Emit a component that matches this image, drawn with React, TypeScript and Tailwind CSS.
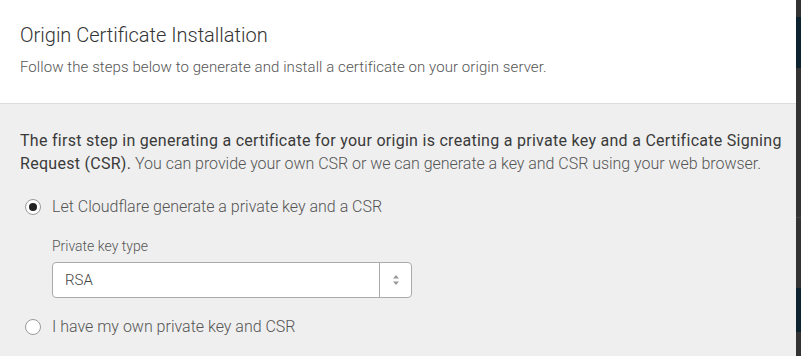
import React, { useState } from "react";

const Radio: React.FC<{ checked: boolean; onSelect: () => void; label: string }> = ({
  checked,
  onSelect,
  label,
}) => {
  return (
    <label className="flex items-center cursor-pointer" onClick={onSelect}>
      <span className="ml-[25px] flex h-[16px] w-[16px] items-center justify-center rounded-full border border-[#999] bg-white">
        {checked && <span className="h-[8px] w-[8px] rounded-full bg-[#222]" />}
      </span>
      <span className="ml-[11px] text-[16px] font-light text-[#555]">{label}</span>
    </label>
  );
};

const App: React.FC = () => {
  const [mode, setMode] = useState<"generate" | "own">("generate");

  return (
    <div className="flex h-[356px] w-[801px] overflow-hidden bg-[#333] font-['Roboto',sans-serif]">
      <div className="flex w-[796px] shrink-0 flex-col">
        <div className="h-[104px] shrink-0 border-b border-[#ddd] bg-white px-[20px] pt-[22px]">
          <h1 className="text-[20px] leading-[26px] font-light text-[#333]">
            Origin Certificate Installation
          </h1>
          <p className="mt-[9px] text-[15px] leading-[20px] font-light tracking-[0.08px] text-[#555]">
            Follow the steps below to generate and install a certificate on your origin server.
          </p>
        </div>

        <div className="flex-1 bg-[#efefef] pt-[25px]">
          <p className="whitespace-nowrap pl-[20px] text-[16px] leading-[23px] font-light tracking-[-0.03px] text-[#555]">
            <span className="text-[#3a3a3a] font-normal tracking-[0.28px]">
              The first step in generating a certificate for your origin is creating a private key
              and a Certificate Signing
              <br />
              Request (CSR).
            </span>{" "}
            You can provide your own CSR or we can generate a key and CSR using your web browser.
          </p>

          <div className="mt-[20px]">
            <Radio
              checked={mode === "generate"}
              onSelect={() => setMode("generate")}
              label="Let Cloudflare generate a private key and a CSR"
            />
          </div>

          <div className="ml-[52px] mt-[18px]">
            <div className="text-[14px] leading-[18px] font-light text-[#555]">Private key type</div>
            <div className="mt-[7px] flex h-[36px] w-[360px] items-stretch rounded-[4px] border border-[#aaa] bg-white">
              <div className="flex flex-1 items-center pl-[12px] text-[15px] font-light text-[#444]">
                RSA
              </div>
              <div className="flex w-[32px] items-center justify-center border-l border-[#aaa]">
                <svg width="8" height="12" viewBox="0 0 8 12">
                  <path d="M4 1 L7 4.5 L1 4.5 Z" fill="#999" />
                  <path d="M4 11 L7 7.5 L1 7.5 Z" fill="#999" />
                </svg>
              </div>
            </div>
          </div>

          <div className="mt-[17px]">
            <Radio
              checked={mode === "own"}
              onSelect={() => setMode("own")}
              label="I have my own private key and CSR"
            />
          </div>
        </div>
      </div>

      <div className="flex flex-1 flex-col">
        <div className="h-[17px]" />
        <div className="h-[51px] bg-[#0d2330]" />
        <div className="h-[149px]" />
        <div className="h-px bg-[#444]" />
        <div className="h-[70px]" />
        <div className="h-[44px] bg-[#0d2330]" />
      </div>
    </div>
  );
};

export default App;
